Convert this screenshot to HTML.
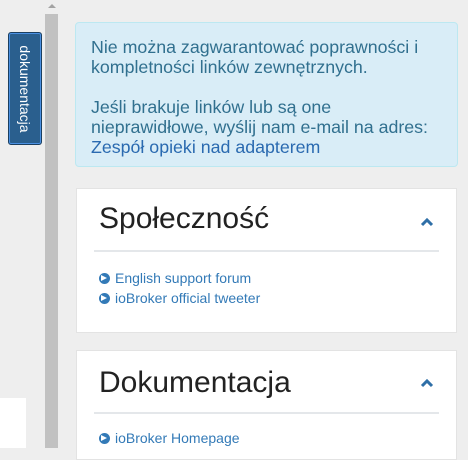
<!DOCTYPE html>
<html><head><style>
body{margin:0;width:468px;height:448px;background:#eee;position:relative;overflow:hidden;font-family:"Liberation Sans",sans-serif}
.sb{position:absolute;left:45px;top:14px;width:13px;height:434px;background:#c1c1c1}
.arr{position:absolute;left:48px;top:4px;width:0;height:0;border-left:4px solid transparent;border-right:4px solid transparent;border-bottom:4px solid #a3a3a3}
.btn{position:absolute;left:8px;top:32px;width:34px;height:113px;background:#2a5f8e;border:1px solid #1b3f60;border-radius:3px;box-sizing:border-box;box-shadow:0 0 0 1px #4a90e2 inset}
.btn span{position:absolute;left:50%;top:50%;transform:translate(-50%,-50%) rotate(90deg);color:#fff;font-size:14px;white-space:nowrap}
.wb{position:absolute;left:0;top:398px;width:26px;height:50px;background:#fff}
.alert{position:absolute;left:75px;top:22px;width:383px;height:145px;box-sizing:border-box;background:#d9edf7;border:1px solid #bce8f1;border-radius:4px;color:#31708f;font-size:17.8px;line-height:20px;padding:14px 15px;white-space:nowrap}
.alert a{color:#2a6ab0}
.panel{position:absolute;left:76px;width:381px;background:#fff;border:1px solid #e3e3e3;box-sizing:border-box}
.panel h2{margin:0;position:absolute;left:22px;font-size:30px;font-weight:normal;color:#222}
.panel .hr{position:absolute;left:17px;right:17px;height:2px;background:#e4e7ea}
.chev{position:absolute;right:22px;width:14px;height:10px}
.lk{position:absolute;left:22px;font-size:14px;color:#337ab7;line-height:20px}
.lk i{display:inline-block;width:11px;height:11px;border-radius:50%;background:#337ab7;vertical-align:-1px;margin-right:5px;position:relative}
.lk i:after{content:"";position:absolute;left:2px;top:2px;width:0;height:0;border-top:3.5px solid transparent;border-bottom:3.5px solid transparent;border-left:6px solid #fff}
</style></head><body>
<div class="arr"></div><div class="sb"></div>
<div class="btn"><span>dokumentacja</span></div>
<div class="wb"></div>
<div class="alert">Nie można zagwarantować poprawności i<br>kompletności linków zewnętrznych.<br><br>Jeśli brakuje linków lub są one<br>nieprawidłowe, wyślij nam e-mail na adres:<br><a>Zespół opieki nad adapterem</a></div>
<div class="panel" style="top:188px;height:145px">
<h2 style="top:13px">Społeczność</h2>
<svg class="chev" style="top:28px" viewBox="0 0 14 10"><path d="M2 8L7 3L12 8" stroke="#2f6fa7" stroke-width="3" fill="none"/></svg>
<div class="hr" style="top:61px"></div>
<div class="lk" style="top:79px"><i></i>English support forum</div>
<div class="lk" style="top:99px"><i></i>ioBroker official tweeter</div>
</div>
<div class="panel" style="top:350px;height:110px">
<h2 style="top:15px">Dokumentacja</h2>
<svg class="chev" style="top:27px" viewBox="0 0 14 10"><path d="M2 8L7 3L12 8" stroke="#2f6fa7" stroke-width="3" fill="none"/></svg>
<div class="hr" style="top:61px"></div>
<div class="lk" style="top:77px"><i></i>ioBroker Homepage</div>
</div>
</body></html>
